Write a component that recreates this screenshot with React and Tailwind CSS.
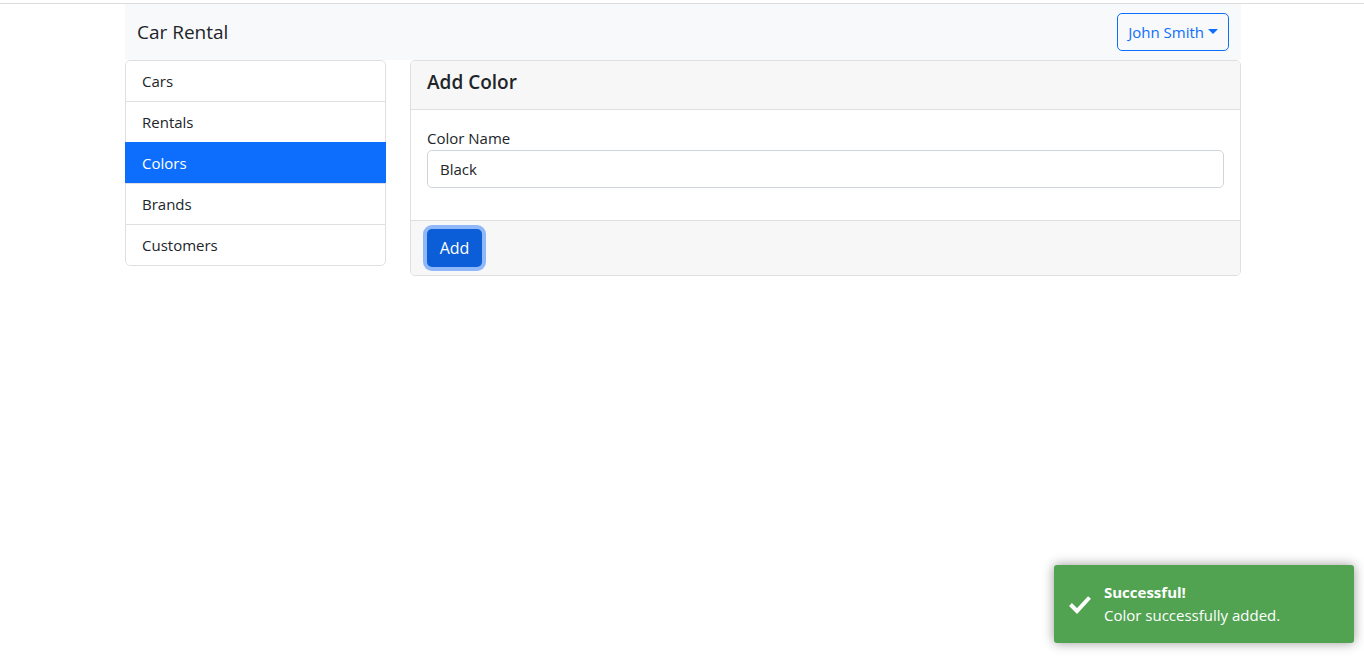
import React from "react";

export default function App() {
  const items = ["Cars", "Rentals", "Colors", "Brands", "Customers"];
  return (
    <div className="min-h-[658px] bg-white text-[#212529] relative" style={{ fontFamily: '"Open Sans", "Noto Sans", sans-serif' }}>
      <div className="h-[4px] border-b border-[#dcdcdc]" />
      <div className="w-[1116px] ml-[125px]">
        <nav className="h-[56px] bg-[#f8f9fa] flex items-center justify-between px-[12px]">
          <span className="text-[19px] leading-[28px]">Car Rental</span>
          <button className="h-[38px] px-[10px] border border-[#0d6efd] rounded-[5px] text-[#0d6efd] text-[15px] flex items-center gap-[4px]">
            John Smith
            <svg width="10" height="6" viewBox="0 0 10 6"><path d="M0 0 L10 0 L5 5 Z" fill="#0d6efd" /></svg>
          </button>
        </nav>
        <div className="flex gap-[24px]">
          <div className="w-[261px] rounded-[5px] overflow-hidden self-start">
            {items.map((it, i) => (
              <div
                key={it}
                className={
                  (i === 2 ? "bg-[#0d6efd] text-white border-[#0d6efd] " : "bg-white border-[#dfdfdf] ") +
                  (i === 0 ? "rounded-t-[5px] " : "") +
                  (i === 4 ? "border-b rounded-b-[5px] h-[42px] " : "h-[41px] ") +
                  "border-x border-t px-[16px] flex items-center text-[15px]"
                }
              >
                {it}
              </div>
            ))}
          </div>
          <div className="flex-1 border border-[#dfdfdf] rounded-[5px] self-start overflow-hidden">
            <div className="h-[49px] bg-[#f7f7f7] border-b border-[#dfdfdf] px-[16px] pb-[5px] flex items-center">
              <span className="text-[19px] font-semibold">Add Color</span>
            </div>
            <div className="px-[16px] pt-[16px] pb-[32px]">
              <div className="text-[15px] leading-[24px]">Color Name</div>
              <div className="h-[38px] border border-[#ced4da] rounded-[5px] px-[12px] flex items-center text-[15px]">Black</div>
            </div>
            <div className="h-[55px] bg-[#f7f7f7] border-t border-[#dfdfdf] px-[16px] flex items-center">
              <button className="h-[38px] w-[55px] bg-[#0b5ed7] text-white text-[16px] rounded-[5px] ring-4 ring-[#90b8f8]">Add</button>
            </div>
          </div>
        </div>
      </div>
      <div className="absolute right-[10px] bottom-[15px] w-[300px] h-[78px] bg-[#51a351] rounded-[3px] shadow-[0_0_12px_#999] text-white flex items-center">
        <div className="w-[50px] flex justify-center pl-[2px]">
          <svg width="24" height="20" viewBox="0 0 24 20"><path d="M2.5 10.5 L9 17 L21.5 3.5" fill="none" stroke="white" strokeWidth="4" /></svg>
        </div>
        <div>
          <div className="text-[15px] font-bold leading-[22px]">Successful!</div>
          <div className="text-[15px] leading-[24px]">Color successfully added.</div>
        </div>
      </div>
    </div>
  );
}
